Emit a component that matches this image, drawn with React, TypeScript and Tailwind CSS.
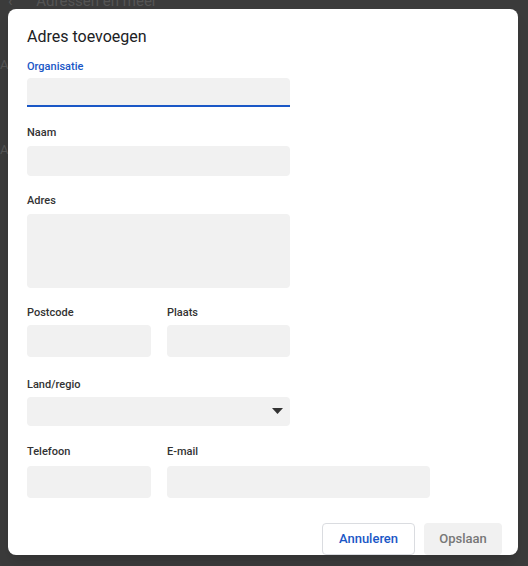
export default function App() {
  const label = "text-[11px] font-medium text-[#333] h-[14px] leading-[14px]";
  const input = "h-[32px] rounded-[4px] bg-[#f1f1f1]";
  return (
    <div className="relative w-[528px] h-[566px] bg-[#3b3b3b] overflow-hidden" style={{ fontFamily: "Roboto, 'Liberation Sans', sans-serif" }}>
      <div className="absolute left-[0px] top-[-6px] text-[#555] text-[15px] pl-[8px] leading-[14px]">‹ <span className="ml-[20px]">Adressen en meer</span></div>
      <div className="absolute left-[0px] top-[55px] text-[#555] text-[13px]">A</div>
      <div className="absolute left-[0px] top-[140px] text-[#555] text-[13px]">A</div>
      <div className="absolute left-[8px] top-[9px] w-[510px] h-[546px] bg-white rounded-[8px] shadow-lg pl-[19px] pr-[16px] pt-[18px] flex flex-col">
        <div className="text-[16px] text-[#202124] h-[20px] leading-[20px]">Adres toevoegen</div>
        <div className="mt-[13px] text-[11px] font-medium text-[#1a57c6] h-[14px] leading-[14px]">Organisatie</div>
        <div className={`mt-[4px] w-[263px] ${input} border-b-2 border-[#1a57c6] rounded-b-none`} />
        <div className={`mt-[19px] ${label}`}>Naam</div>
        <div className={`mt-[6px] w-[263px] ${input}`} />
        <div className={`mt-[18px] ${label}`}>Adres</div>
        <div className="mt-[6px] w-[263px] h-[81px] rounded-[4px] bg-[#f1f1f1]" />
        <div className="mt-[18px] flex gap-[16px]">
          <div className="flex flex-col">
            <div className={label}>Postcode</div>
            <div className={`mt-[5px] w-[124px] ${input}`} />
          </div>
          <div className="flex flex-col">
            <div className={label}>Plaats</div>
            <div className={`mt-[5px] w-[123px] ${input}`} />
          </div>
        </div>
        <div className={`mt-[21px] ${label}`}>Land/regio</div>
        <div className={`mt-[5px] w-[263px] ${input} flex items-center justify-end pr-[7px]`}>
          <svg width="11" height="6" viewBox="0 0 11 6"><path d="M0 0h11L5.5 6z" fill="#333" /></svg>
        </div>
        <div className="mt-[19px] flex gap-[16px]">
          <div className="flex flex-col">
            <div className={label}>Telefoon</div>
            <div className={`mt-[7px] w-[124px] ${input}`} />
          </div>
          <div className="flex flex-col">
            <div className={label}>E-mail</div>
            <div className={`mt-[7px] w-[263px] ${input}`} />
          </div>
        </div>
        <div className="mt-[25px] flex justify-end gap-[9px]">
          <button className="w-[93px] h-[32px] rounded-[4px] border border-[#dadce0] bg-white text-[13px] font-medium text-[#1a57c6]">Annuleren</button>
          <button className="w-[78px] h-[32px] rounded-[4px] bg-[#f1f1f1] text-[13px] font-medium text-[#777]">Opslaan</button>
        </div>
      </div>
    </div>
  );
}
